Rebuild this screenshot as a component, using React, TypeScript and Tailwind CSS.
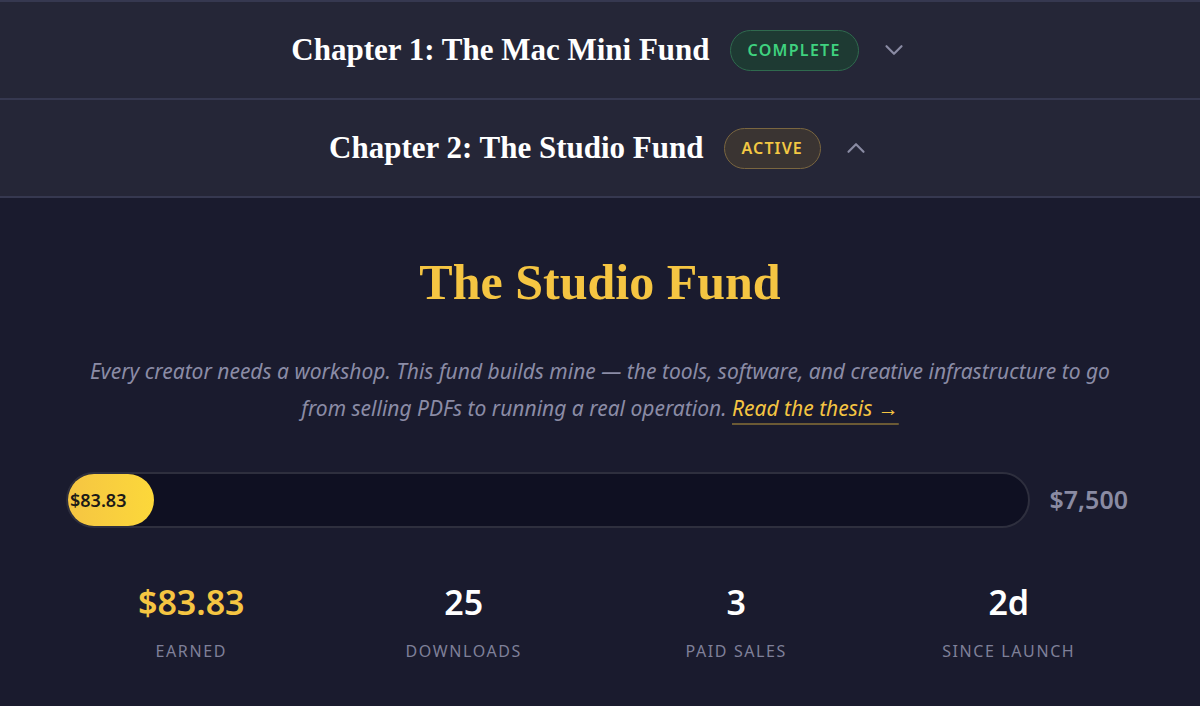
import { ChevronDown, ChevronUp } from "lucide-react";

const STATS = [
  { value: "$83.83", label: "Earned", accent: true },
  { value: "25", label: "Downloads" },
  { value: "3", label: "Paid Sales" },
  { value: "2d", label: "Since Launch" },
];

const serif = { fontFamily: "'Liberation Serif', 'DejaVu Serif', serif" };
const sans = { fontFamily: "'Noto Sans', 'Open Sans', sans-serif" };

export default function App() {
  const raised = 83.83;
  const goal = 7500;
  const pct = Math.max((raised / goal) * 100, 9);

  return (
    <div className="min-h-[706px] w-full bg-[#1a1b2e]" style={sans}>
      {/* Chapter 1 */}
      <div className="border-t-2 border-b-2 border-[#363850] bg-[#252637]">
        <div className="flex h-[96px] items-center justify-center">
          <h3 className="text-[31px] font-bold text-white" style={serif}>
            Chapter 1: The Mac Mini Fund
          </h3>
          <span className="ml-[20px] flex h-[41px] items-center rounded-full border border-[#2f6a4e] bg-[#1e3a33] px-[17px] text-[16px] font-semibold tracking-[0.08em] text-[#3fd27f]">
            COMPLETE
          </span>
          <ChevronDown className="ml-[20px] size-[30px] text-[#8a8ba3]" strokeWidth={1.75} />
        </div>
      </div>

      {/* Chapter 2 */}
      <div className="border-b-2 border-[#363850] bg-[#252637]">
        <div className="flex h-[96px] items-center justify-center">
          <h3 className="text-[31px] font-bold text-white" style={serif}>
            Chapter 2: The Studio Fund
          </h3>
          <span className="ml-[20px] flex h-[41px] items-center rounded-full border border-[#7a6640] bg-[#3a3432] px-[17px] text-[16px] font-semibold tracking-[0.07em] text-[#f3c843]">
            ACTIVE
          </span>
          <ChevronUp className="ml-[20px] size-[30px] text-[#8a8ba3]" strokeWidth={1.75} />
        </div>
      </div>

      {/* Active chapter body */}
      <div className="mx-auto max-w-[1090px] pt-[50px]">
        <h2 className="text-center text-[50px] font-bold leading-[68px] text-[#f5c542]" style={serif}>
          The Studio Fund
        </h2>

        <p className="mx-auto mt-[37px] max-w-[1060px] text-center text-[21px] italic leading-[37px] text-[#8b8ca6]">
          Every creator needs a workshop. This fund builds mine — the tools, software, and creative infrastructure to go
          from selling PDFs to running a real operation.{" "}
          <a
            href="#thesis"
            className="text-[#f5c542] underline decoration-[#6b5a35] decoration-2 underline-offset-[7px]"
          >
            Read the thesis →
          </a>
        </p>

        <div className="mt-[45px] flex items-center gap-[20px] pl-[11px] pr-[17px]">
          <div className="h-[56px] flex-1 rounded-full border-2 border-[#2e2f3e] bg-[#0f1022]">
            <div
              className="flex h-full items-center rounded-full bg-gradient-to-r from-[#f5c542] to-[#fcd83a] pl-[2px]"
              style={{ width: `${pct}%` }}
            >
              <span className="text-[18px] font-semibold text-[#1d1a18]">$83.83</span>
            </div>
          </div>
          <span className="text-[25px] font-semibold text-[#8a8ba3]">$7,500</span>
        </div>

        <div className="mt-[53px] grid grid-cols-4">
          {STATS.map((s) => (
            <div key={s.label} className="flex flex-col items-center">
              <span
                className={`text-[34px] font-semibold leading-[42px] ${s.accent ? "text-[#f5c542]" : "text-white"}`}
              >
                {s.value}
              </span>
              <span className="mt-[16px] text-[16px] uppercase tracking-[0.1em] text-[#7f8099]">{s.label}</span>
            </div>
          ))}
        </div>
      </div>
    </div>
  );
}
